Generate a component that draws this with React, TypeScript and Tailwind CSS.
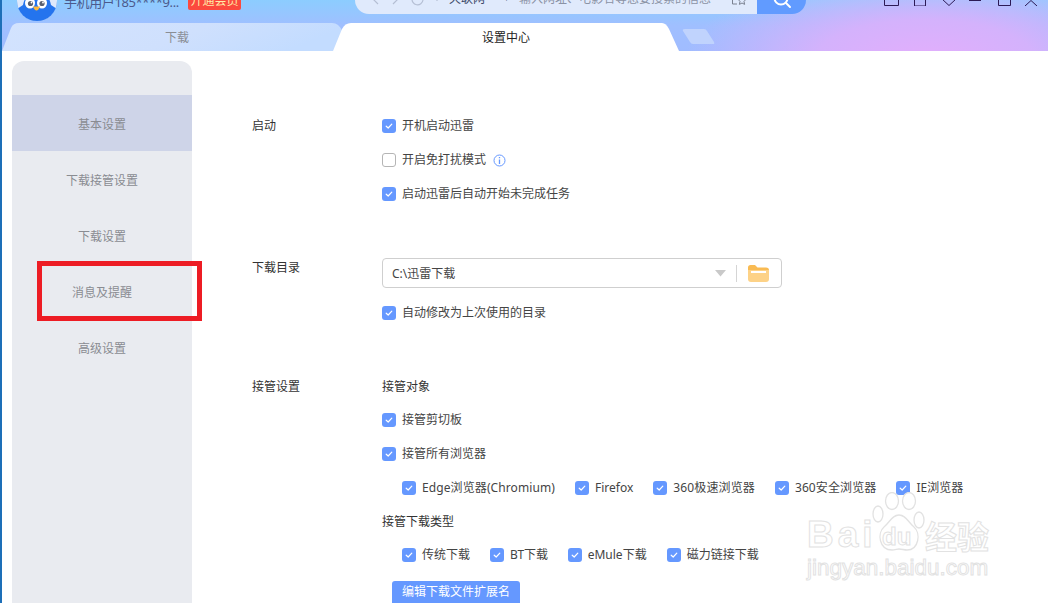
import React from "react";

function Check({ checked = true }: { checked?: boolean }) {
  if (!checked)
    return <span className="block w-[14px] h-[14px] shrink-0 rounded-[3px] border border-[#b5b5b5] bg-white" />;
  return (
    <span className="flex items-center justify-center w-[14px] h-[14px] shrink-0 rounded-[3px] bg-[#6598ff]">
      <svg width="10" height="10" viewBox="0 0 10 10" fill="none">
        <path d="M2.2 5.2 L4.2 7 L7.8 3.2" stroke="#fff" strokeWidth="1.2" strokeLinecap="round" strokeLinejoin="round" />
      </svg>
    </span>
  );
}

function Opt({ label, checked = true, textClass, children }: { label: string; checked?: boolean; textClass?: string; children?: React.ReactNode }) {
  return (
    <div className="flex items-center gap-[6px] h-[14px] text-[12px] text-[#444] whitespace-nowrap">
      <Check checked={checked} />
      <span className={textClass}>{label}</span>
      {children}
    </div>
  );
}

function Row({ label, className, labelClass, children }: { label: string; className?: string; labelClass?: string; children: React.ReactNode }) {
  return (
    <div className={"flex " + (className ?? "")}>
      <div className={"w-[130px] shrink-0 text-[12px] leading-[14px] text-[#333] " + (labelClass ?? "")}>{label}</div>
      <div className="flex flex-col">{children}</div>
    </div>
  );
}

function Watermark() {
  return (
    <div className="absolute left-[805px] top-[488px] w-[190px] h-[105px] pointer-events-none select-none text-white [-webkit-text-stroke:1px_#e2e2e2]">
      <svg className="absolute left-[65px] top-[4px]" width="55" height="60" viewBox="0 0 55 60" fill="#fff" stroke="#e2e2e2" strokeWidth="1.3">
        <ellipse cx="6" cy="22" rx="5" ry="8" />
        <ellipse cx="20" cy="9" rx="6.5" ry="8.5" />
        <ellipse cx="37" cy="9" rx="6.5" ry="8.5" />
        <ellipse cx="47" cy="28" rx="5" ry="8" />
        <path d="M27 23 C20 23 18 30 12 35 C5 41 7 58 20 58 C23 58 25 57 27 57 C30 57 32 58 35 58 C47 58 49 41 42 35 C36 30 34 23 27 23 Z" />
      </svg>
      <div className="absolute left-0 top-[25px] text-[37px] leading-[44px] font-['Liberation_Sans',sans-serif] font-bold tracking-[4px]">Bai</div>
      <div className="absolute left-[75px] top-[35px] text-[24px] leading-[28px] font-['Liberation_Sans',sans-serif] font-bold">du</div>
      <div className="absolute left-[118px] top-[27px] text-[32px] leading-[40px] font-['Noto_Sans_CJK_SC',sans-serif] font-bold">经验</div>
      <div className="absolute left-[0px] top-[65px] text-[22.5px] leading-[30px] font-['Liberation_Sans',sans-serif] whitespace-nowrap">jingyan.baidu.com</div>
    </div>
  );
}

export default function App() {
  return (
    <div className="relative w-[1048px] h-[603px] overflow-hidden bg-white font-['Noto_Sans','Noto_Sans_CJK_SC',sans-serif] border-l-2 border-[#1d6fb8]">
      {/* header */}
      <div className="relative h-[51px] -ml-[2px] pl-[2px] overflow-hidden bg-[radial-gradient(ellipse_240px_85px_at_925px_58px,#e2aefc_0%,#d4b2fc_45%,rgba(190,180,255,0)_100%),linear-gradient(180deg,#8ccdff_0px,#a0bfff_26px,#a0bcff_51px)]">
        <div className="flex h-[23px]">
          <div className="ml-[15px] mt-[-19px] w-[40px] h-[40px] shrink-0 rounded-full bg-[#2a7cf0] relative overflow-hidden">
            <svg className="absolute inset-0" width="40" height="40" viewBox="0 0 40 40">
              <rect width="40" height="40" fill="#dfe9fb" />
              <path d="M0 40 L0 28 Q3 26 6 24 Q8 12 20 12 Q32 12 34 24 Q37 26 40 28 L40 40 Z" fill="#2474ee" />
              <ellipse cx="13" cy="22" rx="5" ry="5.5" fill="#fff" />
              <ellipse cx="25" cy="22" rx="5" ry="5.5" fill="#fff" />
              <circle cx="13.5" cy="22.5" r="2.6" fill="#5a6070" />
              <circle cx="25" cy="22.5" r="2.6" fill="#5a6070" />
              <circle cx="14.5" cy="21.5" r="0.9" fill="#fff" />
              <circle cx="26" cy="21.5" r="0.9" fill="#fff" />
              <path d="M16 25.5 L23 25.5 Q21.5 29.5 19.5 29.5 Q17.5 29.5 16 25.5 Z" fill="#fdb73c" />
            </svg>
          </div>
          <div className="ml-[7px] mt-[-8px] w-[116px] shrink-0 text-[13px] leading-[20px] tracking-[-0.4px] text-[#4c5a8c] whitespace-nowrap">手机用户185****9...</div>
          <div className="ml-[8px] mt-[-8px] w-[53px] h-[18px] shrink-0 rounded-b-[2px] bg-[#fb4a3e] text-[12px] leading-[18px] text-center text-[#ffe9a8] whitespace-nowrap">开通会员</div>
          <div className="ml-[114px] mt-[-16px] w-[402px] h-[30px] shrink-0 rounded-bl-[14px] bg-[#e0eafc] flex items-center pl-[14px] text-[12px] text-[#555] whitespace-nowrap">
            <svg width="70" height="14" viewBox="0 0 70 14" fill="none" stroke="#b5bfd4" strokeWidth="1.2" className="shrink-0">
              <path d="M9 2 L4 7 L9 12 M24 2 L29 7 L24 12" />
              <path d="M50 2 A5.5 5.5 0 1 0 54 8" />
              <path d="M68 4 V9" />
            </svg>
            <span className="ml-[10px] text-[#3d4a6a]">天联网</span>
            <span className="ml-[20px] text-[6px] text-[#3d4a6a]">▾</span>
            <span className="ml-[11px] text-[#8b93a5]">输入网址、电影名等您要搜索的信息</span>
            <svg className="ml-[20px] shrink-0" width="16" height="14" viewBox="0 0 16 14" fill="none" stroke="#7a8190" strokeWidth="1">
              <path d="M8 2 H1.5 V12 H6" />
              <path d="M11 4 L12.3 7 L15 7.3 L13 9.4 L13.6 12.4 L11 11 L8.4 12.4 L9 9.4 L7 7.3 L9.7 7 Z" />
            </svg>
          </div>
          <div className="mt-[-16px] w-[49px] h-[30px] shrink-0 rounded-br-[14px] bg-[#619bff] flex items-center justify-center">
            <svg width="22" height="22" viewBox="0 0 22 22" fill="none" stroke="#fff" strokeWidth="2" className="mt-[4px]">
              <circle cx="10" cy="8" r="6.5" />
              <path d="M15 13 L19 17" strokeLinecap="round" />
            </svg>
          </div>
          <div className="ml-[78px] mt-[-10px] h-[16px] flex items-end shrink-0">
            <svg width="155" height="16" viewBox="0 0 155 16" fill="none" stroke="#2c1a55" strokeWidth="1">
              <path d="M0.5 0 V15.5 H14.5 V0" />
              <path d="M30.5 0 V16 H41.5 V0" />
              <path d="M58 9 L65 15.5 L72 9" />
              <path d="M85 10.5 H97" />
              <path d="M114.5 0 V15.5 H126.5 V0" />
              <path d="M141 16 L147 10.5 L153 16" />
            </svg>
          </div>
        </div>
        {/* tabs */}
        <div className="relative flex h-[28px] text-[12px]">
          <div className="relative w-[346px] -ml-[2px] shrink-0">
            <svg className="absolute left-0 top-0" width="346" height="28" viewBox="0 0 346 28">
              <defs>
                <linearGradient id="t1" x1="0" x2="1" y1="0" y2="0.2">
                  <stop offset="0" stopColor="#d3e3fe" />
                  <stop offset="0.6" stopColor="#cfe0fd" />
                  <stop offset="1" stopColor="#c3dcff" />
                </linearGradient>
              </defs>
              <path d="M2 28 L11 5 Q13 0 19 0 L332 0 Q339 0 342 8 L334 28 Z" fill="url(#t1)" />
            </svg>
            <div className="relative w-[354px] text-center leading-[28px] pt-[1px] text-[#8a8d94]">下载</div>
          </div>
          <div className="relative w-[346px] -ml-[13px] shrink-0">
            <svg className="absolute left-0 top-0" width="346" height="28" viewBox="0 0 346 28">
              <path d="M0 28 L9 6 Q12 0 18 0 L329 0 Q333 0 336 6 L346 28 Z" fill="#fff" />
            </svg>
            <div className="relative text-center leading-[28px] pt-[1px] text-[#222]">设置中心</div>
          </div>
          <svg className="ml-[3px] mt-[6px] shrink-0" width="33" height="16" viewBox="0 0 33 16">
            <path d="M3 0 H22 Q24 0 25 2 L32 13 Q33 15 31 15 H11 Q9 15 8 13 L1 2 Q0 0 3 0 Z" fill="#c0d3fd" />
          </svg>
        </div>
      </div>

      {/* body */}
      <div className="flex h-[552px]">
        <aside className="ml-[10px] mt-[10px] w-[180px] h-[600px] shrink-0 rounded-t-[12px] bg-[#e9ebf0] pt-[34px] text-[12px] text-[#8a8c92]">
          <div className="h-[56px] flex items-center justify-center pt-[3px] bg-[#ced4e8]">基本设置</div>
          <div className="h-[56px] flex items-center justify-center pt-[3px]">下载接管设置</div>
          <div className="h-[56px] flex items-center justify-center pt-[3px]">下载设置</div>
          <div className="h-[56px] flex items-center justify-center pt-[3px]">消息及提醒</div>
          <div className="h-[56px] flex items-center justify-center pt-[3px]">高级设置</div>
        </aside>

        <main className="ml-[60px] pt-[68px] flex flex-col">
          <Row label="启动">
            <div className="flex flex-col gap-[20px]">
              <Opt label="开机启动迅雷" />
              <Opt label="开启免打扰模式" checked={false}>
                <svg className="ml-[1px]" width="13" height="13" viewBox="0 0 13 13" fill="none" stroke="#6598ff">
                  <circle cx="6.5" cy="6.5" r="5.5" />
                  <path d="M6.5 5.5 V10 M6.5 3 V4.2" strokeWidth="1.3" />
                </svg>
              </Opt>
              <Opt label="启动迅雷后自动开始未完成任务" />
            </div>
          </Row>

          <Row label="下载目录" labelClass="pt-[2px]" className="mt-[58px]">
            <div className="mt-[-1px] w-[400px] h-[30px] rounded-[4px] border border-[#cfcfcf] flex items-center pl-[9px] text-[12px] text-[#444]">
              <span className="flex-1 pt-[1px]">C:\迅雷下载</span>
              <svg width="11" height="7" viewBox="0 0 11 7"><path d="M0 0 H11 L5.5 6.5 Z" fill="#c9c9c9" /></svg>
              <span className="ml-[10px] w-px h-[17px] bg-[#d5d5d5]" />
              <svg className="ml-[11px] mr-[12px]" width="21" height="17" viewBox="0 0 21 17">
                <path d="M0 2.5 Q0 0 2.5 0 H7 L9.5 2.5 H18 Q21 2.5 21 5 V7 H0 Z" fill="#f9bb53" />
                <path d="M0 5 H21 V14 Q21 17 18 17 H3 Q0 17 0 14 Z" fill="#fdd287" />
                <path d="M3 6 H18 V8 H3 Z" fill="#fff" />
              </svg>
            </div>
            <div className="mt-[18px]"><Opt label="自动修改为上次使用的目录" /></div>
          </Row>

          <Row label="接管设置" className="mt-[60px]">
            <div className="text-[12px] leading-[14px] text-[#333]">接管对象</div>
            <div className="mt-[19px]"><Opt label="接管剪切板" /></div>
            <div className="mt-[20px]"><Opt label="接管所有浏览器" /></div>
            <div className="mt-[20px] ml-[20px] flex gap-[20px]">
              <Opt label="Edge浏览器(Chromium)" textClass="tracking-[0.1px]" />
              <Opt label="Firefox" />
              <Opt label="360极速浏览器" textClass="tracking-[0.12px]" />
              <Opt label="360安全浏览器" textClass="tracking-[0.12px]" />
              <Opt label="IE浏览器" />
            </div>
            <div className="mt-[20px] text-[12px] leading-[14px] text-[#333]">接管下载类型</div>
            <div className="mt-[19px] ml-[20px] flex gap-[20px]">
              <Opt label="传统下载" />
              <Opt label="BT下载" textClass="tracking-[-0.2px]" />
              <Opt label="eMule下载" />
              <Opt label="磁力链接下载" />
            </div>
            <div className="mt-[19px] ml-[10px] w-[128px] h-[30px] rounded-[3px] bg-[#6598ff] text-center text-[12px] leading-[22px] text-white">编辑下载文件扩展名</div>
          </Row>
        </main>
      </div>

      <div className="absolute left-[35px] top-[261px] w-[165px] h-[60px] border-[5px] border-[#ed1c24]" />
      <Watermark />
    </div>
  );
}
